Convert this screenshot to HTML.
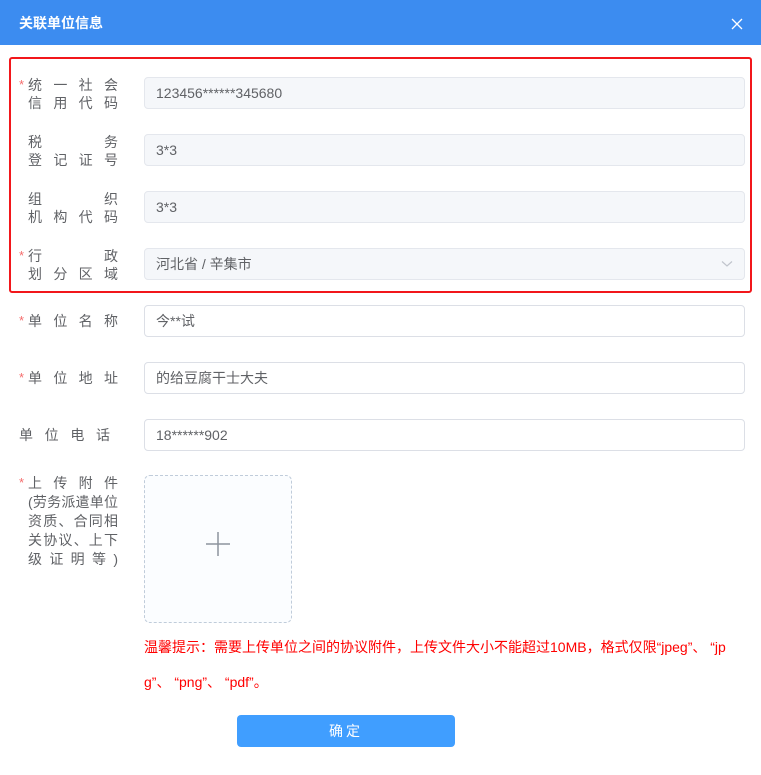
<!DOCTYPE html>
<html><head><meta charset="utf-8">
<style>
*{margin:0;padding:0;box-sizing:border-box}
body{width:761px;height:775px;background:#fff;position:relative;overflow:hidden;font-family:"Liberation Sans","Noto Sans CJK SC",sans-serif;font-size:14px;color:#606266}
.hd{position:absolute;left:0;top:0;width:761px;height:45px;background:#3c8cf0}
.hd .t{position:absolute;left:19px;top:14px;color:#fff;font-weight:bold;font-size:14px;line-height:18px}
.box{position:absolute;left:9px;top:57px;width:743px;height:236px;border:2px solid #f2171b;border-radius:3px}
.inp{position:absolute;left:144px;width:601px;height:32px;border:1px solid #dcdfe6;border-radius:4px;background:#fff;padding-left:11px;line-height:30px;color:#606266;font-size:14px}
.dis{background:#f5f7fa;border-color:#e4e7ed}
.lab{position:absolute;left:28px;width:90px;line-height:18px;font-size:14px;color:#606266}
.lab div{text-align:justify;text-align-last:justify;white-space:nowrap}
.star{position:absolute;left:19px;color:#f56c6c;font-size:13px}
.up{position:absolute;left:144px;top:475px;width:148px;height:148px;border:1px dashed #c0ccda;border-radius:6px;background:#fbfdff}
.hint{position:absolute;left:144px;top:630px;color:#f00;font-size:14px;line-height:35px;width:610px}
.btn{position:absolute;left:237px;top:715px;width:218px;height:32px;background:#409eff;border-radius:4px;color:#fff;text-align:center;line-height:32px;font-size:14px;letter-spacing:3px}
</style></head><body>
<div class="hd"><div class="t">关联单位信息</div>
<svg style="position:absolute;left:731px;top:18px" width="12" height="12" viewBox="0 0 12 12"><path d="M1 1L11 11M11 1L1 11" stroke="#fff" stroke-width="1.3"/></svg></div>
<div class="box"></div>

<span class="star" style="top:77px">*</span>
<div class="lab" style="top:76px"><div>统 一 社 会</div><div>信 用 代 码</div></div>
<div class="inp dis" style="top:77px">123456******345680</div>

<div class="lab" style="top:133px"><div>税 务</div><div>登 记 证 号</div></div>
<div class="inp dis" style="top:134px">3*3</div>

<div class="lab" style="top:190px"><div>组 织</div><div>机 构 代 码</div></div>
<div class="inp dis" style="top:191px">3*3</div>

<span class="star" style="top:248px">*</span>
<div class="lab" style="top:247px"><div>行 政</div><div>划 分 区 域</div></div>
<div class="inp dis" style="top:248px">河北省 / 辛集市
<svg style="position:absolute;right:11px;top:11px" width="12" height="8" viewBox="0 0 12 8"><path d="M1 1.5L6 6L11 1.5" stroke="#c0c4cc" fill="none" stroke-width="1.2"/></svg></div>

<span class="star" style="top:313px">*</span>
<div class="lab" style="top:312px"><div>单 位 名 称</div></div>
<div class="inp" style="top:305px">今**试</div>

<span class="star" style="top:370px">*</span>
<div class="lab" style="top:369px"><div>单 位 地 址</div></div>
<div class="inp" style="top:362px">的给豆腐干士大夫</div>

<div class="lab" style="top:426px;left:19px;width:91px"><div>单 位 电 话</div></div>
<div class="inp" style="top:419px">18******902</div>

<span class="star" style="top:475px">*</span>
<div class="lab" style="top:474px;line-height:19px"><div>上 传 附 件</div><div>(劳务派遣单位</div><div>资质、合同相</div><div>关协议、上下</div><div>级 证 明 等 )</div></div>
<div class="up"><svg style="position:absolute;left:61px;top:56px" width="24" height="24" viewBox="0 0 24 24"><path d="M12 0V24M0 12H24" stroke="#8c939d" stroke-width="1.5"/></svg></div>

<div class="hint">温馨提示：需要上传单位之间的协议附件，上传文件大小不能超过10MB，格式仅限“jpeg”、 “jp<br>g”、 “png”、 “pdf”。</div>
<div class="btn">确定</div>
</body></html>
